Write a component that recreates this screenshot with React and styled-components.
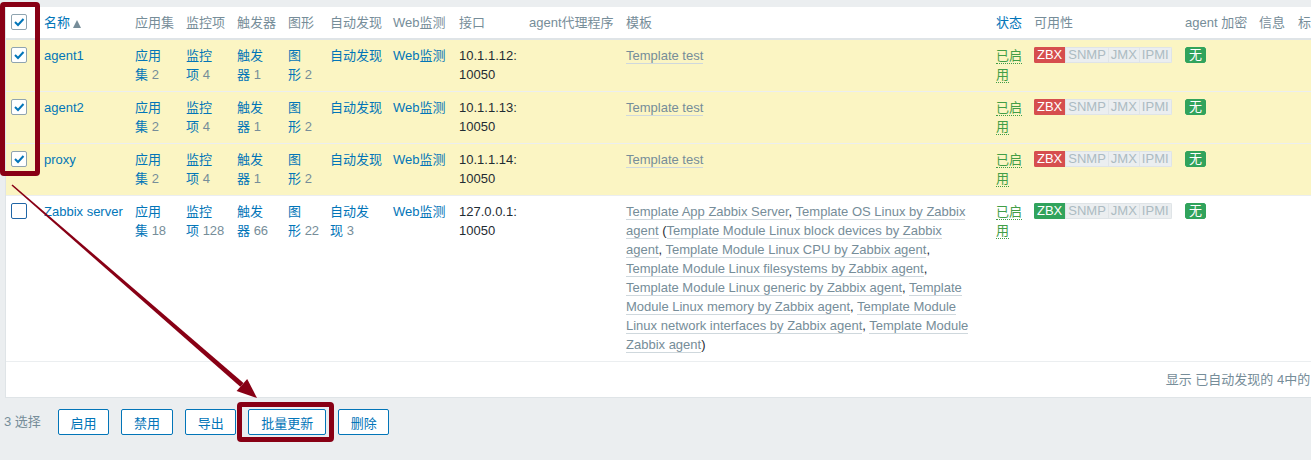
import styled, { createGlobalStyle } from 'styled-components';

const GlobalStyle = createGlobalStyle`
	html, body {
		margin: 0;
		overflow: hidden;
		background: #ebeef0;
	}
	body {
		font-family: 'Liberation Sans', Arial, 'Noto Sans CJK SC', sans-serif;
		font-size: 13px;
		color: #1f2c33;
	}
`;

const Page = styled.div`
	position: relative;
	width: 1311px;
	height: 460px;
	padding-top: 7px;
	box-sizing: border-box;
`;

const Panel = styled.div`
	margin-left: 5px;
	width: 1320px;
	background: #fff;
	border-left: 1px solid #dfe4e7;
	border-bottom: 1px solid #dfe4e7;
`;

const Table = styled.table`
	width: 1319px;
	table-layout: fixed;
	border-collapse: collapse;
`;

const Th = styled.th`
	padding: 6px 5px;
	line-height: 19px;
	font-weight: normal;
	text-align: left;
	white-space: nowrap;
	overflow: hidden;
	color: ${(p) => (p.$sort ? '#0275b8' : '#768d99')};
	border-bottom: 2px solid #dfe4e7;
	vertical-align: top;
`;

const Row = styled.tr`
	background: ${(p) => (p.$selected ? '#fbf5c3' : '#fff')};
`;

const Td = styled.td`
	padding: 6px 5px 7px;
	line-height: 19px;
	vertical-align: top;
	border-bottom: 1px solid #ebeef0;
`;

const TemplateCell = styled(Td)`
	padding-right: 14px;
`;

const SortArrow = styled.span`
	display: inline-block;
	margin-left: 3px;
	width: 0;
	height: 0;
	border-left: 4.5px solid transparent;
	border-right: 4.5px solid transparent;
	border-bottom: 8px solid #768d99;
	vertical-align: -1px;
`;

const Box = styled.span`
	display: block;
	width: 16px;
	height: 16px;
	margin-top: 1px;
	box-sizing: border-box;
	background: #fff;
	border: 1px solid ${(p) => (p.$checked ? '#8fa4b0' : '#1f65a6')};
	border-radius: 2px;
	svg {
		display: block;
	}
`;

const Link = styled.a`
	color: #0275b8;
	text-decoration: none;
	cursor: pointer;
`;

const Count = styled.span`
	color: #768d99;
`;

const Tpl = styled.a`
	color: #768d99;
	text-decoration: none;
	border-bottom: 1px solid #cfd8dd;
`;

const Status = styled.a`
	color: #429e47;
	text-decoration: none;
	border-bottom: 1px dotted #429e47;
`;

const Avail = styled.span`
	display: inline-flex;
	margin-top: 1px;
	vertical-align: top;
	border-radius: 2px;
	overflow: hidden;
`;

const Tag = styled.span`
	display: inline-block;
	padding: 0 ${(p) => (p.$round ? '3px' : '2px')};
	line-height: 14px;
	border: 1px solid ${(p) => p.$line || p.$bg};
	border-left-width: ${(p) => (p.$join ? '0' : '1px')};
	background: ${(p) => p.$bg};
	color: ${(p) => p.$fg};
	border-radius: ${(p) => (p.$round ? '2px' : '0')};
`;

const Footer = styled.div`
	padding: 8px 5px;
	line-height: 19px;
	text-align: right;
	color: #768d99;
`;

const Actions = styled.div`
	display: flex;
	align-items: center;
	gap: 12px;
	padding: 11px 0 0 4px;
`;

const Selected = styled.span`
	color: #768d99;
	line-height: 26px;
	margin-right: 5px;
`;

const Button = styled.button`
	height: 26px;
	padding: 0 11.75px;
	font: inherit;
	color: #0275b8;
	background: #fff;
	border: 1px solid #0275b8;
	border-radius: 2px;
	cursor: pointer;
`;

const Mark = styled.div`
	position: absolute;
	left: ${(p) => p.$x}px;
	top: ${(p) => p.$y}px;
	width: ${(p) => p.$w}px;
	height: ${(p) => p.$h}px;
	box-sizing: border-box;
	border: 5px solid #880015;
	border-radius: 4px;
	pointer-events: none;
`;

const Arrow = styled.svg`
	position: absolute;
	left: 0;
	top: 0;
	pointer-events: none;
`;

const GREEN = '#31a35c';
const RED = '#d64e4e';

const cols = [33, 91, 51, 51, 51, 42, 63, 66, 70, 97, 370, 38, 151, 74, 39, 32];

const hosts = [
	{ name: 'agent1', apps: 2, items: 4, triggers: 1, graphs: 2, ip: '10.1.1.12:', zbx: RED, selected: true, templates: [{ name: 'Template test' }] },
	{ name: 'agent2', apps: 2, items: 4, triggers: 1, graphs: 2, ip: '10.1.1.13:', zbx: RED, selected: true, templates: [{ name: 'Template test' }] },
	{ name: 'proxy', apps: 2, items: 4, triggers: 1, graphs: 2, ip: '10.1.1.14:', zbx: RED, selected: true, templates: [{ name: 'Template test' }] },
	{
		name: 'Zabbix server',
		apps: 18,
		items: 128,
		triggers: 66,
		graphs: 22,
		discovery: 3,
		ip: '127.0.0.1:',
		zbx: GREEN,
		templates: [
			{ name: 'Template App Zabbix Server' },
			{
				name: 'Template OS Linux by Zabbix agent',
				children: [
					'Template Module Linux block devices by Zabbix agent',
					'Template Module Linux CPU by Zabbix agent',
					'Template Module Linux filesystems by Zabbix agent',
					'Template Module Linux generic by Zabbix agent',
					'Template Module Linux memory by Zabbix agent',
					'Template Module Linux network interfaces by Zabbix agent',
					'Template Module Zabbix agent',
				],
			},
		],
	},
];

function Checkbox({ checked }) {
	return (
		<Box $checked={checked}>
			{checked && (
				<svg width="14" height="14" viewBox="0 0 14 14">
					<polyline points="3,7 6,10 11.5,4" fill="none" stroke="#0275b8" strokeWidth="2" />
				</svg>
			)}
		</Box>
	);
}

function Counted({ label, n }) {
	return (
		<>
			<Link>{label}</Link>
			{n != null && <Count>{'\u00a0' + n}</Count>}
		</>
	);
}

function Templates({ list }) {
	return list.map((t, i) => (
		<span key={t.name}>
			{i > 0 && ', '}
			<Tpl>{t.name}</Tpl>
			{t.children && (
				<>
					{' ('}
					{t.children.map((c, j) => (
						<span key={c}>
							{j > 0 && ', '}
							<Tpl>{c}</Tpl>
						</span>
					))}
					)
				</>
			)}
		</span>
	));
}

function Availability({ zbx }) {
	const grey = { $bg: '#ebeef0', $fg: '#acbbc2', $line: '#dfe4e7' };
	return (
		<Avail>
			<Tag $bg={zbx} $fg="#fff">ZBX</Tag>
			<Tag {...grey}>SNMP</Tag>
			<Tag {...grey} $join>JMX</Tag>
			<Tag {...grey} $join>IPMI</Tag>
		</Avail>
	);
}

export default function App() {
	return (
		<Page>
			<GlobalStyle />
			<Panel>
				<Table>
					<colgroup>
						{cols.map((w, i) => (
							<col key={i} style={{ width: w }} />
						))}
					</colgroup>
					<thead>
						<tr>
							<Th>
								<Checkbox checked />
							</Th>
							<Th $sort>
								名称
								<SortArrow />
							</Th>
							<Th>应用集</Th>
							<Th>监控项</Th>
							<Th>触发器</Th>
							<Th>图形</Th>
							<Th>自动发现</Th>
							<Th>Web监测</Th>
							<Th>接口</Th>
							<Th>agent代理程序</Th>
							<Th>模板</Th>
							<Th $sort>状态</Th>
							<Th>可用性</Th>
							<Th>agent 加密</Th>
							<Th>信息</Th>
							<Th>标签</Th>
						</tr>
					</thead>
					<tbody>
						{hosts.map((h) => (
							<Row key={h.name} $selected={h.selected}>
								<Td>
									<Checkbox checked={h.selected} />
								</Td>
								<Td>
									<Link>{h.name}</Link>
								</Td>
								<Td>
									<Counted label="应用集" n={h.apps} />
								</Td>
								<Td>
									<Counted label="监控项" n={h.items} />
								</Td>
								<Td>
									<Counted label="触发器" n={h.triggers} />
								</Td>
								<Td>
									<Counted label="图形" n={h.graphs} />
								</Td>
								<Td>
									<Counted label="自动发现" n={h.discovery} />
								</Td>
								<Td>
									<Link>Web监测</Link>
								</Td>
								<Td>{h.ip} 10050</Td>
								<Td />
								<TemplateCell>
									<Templates list={h.templates} />
								</TemplateCell>
								<Td>
									<Status>已启用</Status>
								</Td>
								<Td>
									<Availability zbx={h.zbx} />
								</Td>
								<Td>
									<Avail>
										<Tag $bg={GREEN} $fg="#fff" $round>
											无
										</Tag>
									</Avail>
								</Td>
								<Td />
								<Td />
							</Row>
						))}
					</tbody>
				</Table>
				<Footer>显示 已自动发现的 4中的 4</Footer>
			</Panel>
			<Actions>
				<Selected>3 选择</Selected>
				<Button>启用</Button>
				<Button>禁用</Button>
				<Button>导出</Button>
				<Button>批量更新</Button>
				<Button>删除</Button>
			</Actions>

			<Mark $x={0} $y={2} $w={40} $h={174} />
			<Mark $x={237} $y={402} $w={97} $h={40} />
			<Arrow width="1311" height="460" viewBox="0 0 1311 460">
				<polygon points="11.5,185.6 12.5,184.4 243.5,383 240.3,386.8" fill="#880015" />
				<polygon points="257,398 236.6,390.9 247.2,378.9" fill="#880015" />
			</Arrow>
		</Page>
	);
}
